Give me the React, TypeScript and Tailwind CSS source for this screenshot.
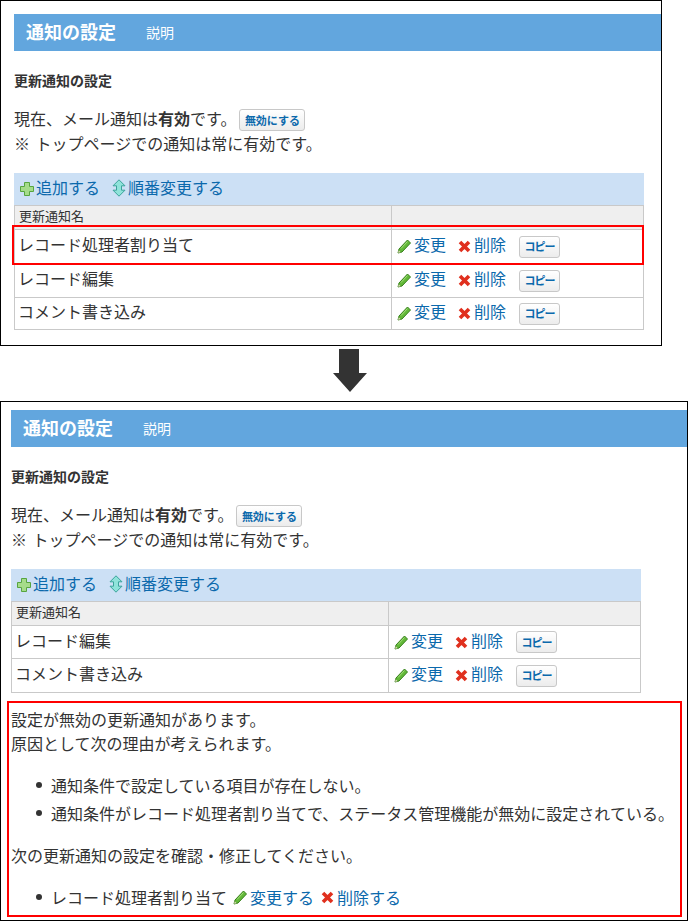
import * as React from 'react';

const font = { fontFamily: '"Noto Sans CJK JP", "Noto Sans", sans-serif' };

function PlusIcon() {
    return (
        <svg width="14" height="14" viewBox="0 0 14 14" className="mt-[4px] shrink-0">
            <path d="M4.5 .5h5v4h4v5h-4v4h-5v-4h-4v-5h4z" fill="#a5dc8a" stroke="#57a53f" strokeWidth="1" />
        </svg>
    );
}

function SortIcon() {
    return (
        <svg width="14" height="18" viewBox="0 0 14 18" className="mt-[2px] shrink-0">
            <path d="M7 .8l6 6H9.5v4.4H13l-6 6-6-6h3.5V6.8H1z" fill="#8fe3da" stroke="#3ba39a" strokeWidth="1" />
        </svg>
    );
}

function PencilIcon() {
    return (
        <svg width="14" height="15" viewBox="0 0 14 15" className="shrink-0">
            <path d="M10.5 1L13.5 4 5 13 1 14l1-4z" fill="#62b838" stroke="#37801c" strokeWidth="1" strokeLinejoin="round" />
            <path d="M10.5 2.5L4 9.5" stroke="#a6e07c" strokeWidth="1" />
            <path d="M1.2 13.8l.5-2.6 2 2z" fill="#e8dcc0" />
        </svg>
    );
}

function CrossIcon() {
    return (
        <svg width="13" height="13" viewBox="0 0 13 13" className="shrink-0">
            <path d="M2 2l9 9M11 2l-9 9" stroke="#e0301e" strokeWidth="3.6" />
        </svg>
    );
}

function SmallButton({ children, className }: { children: React.ReactNode; className: string }) {
    return (
        <button className={`flex items-center justify-center rounded-[3px] border border-[#c8c8c8] bg-gradient-to-b from-white to-[#ececec] font-bold text-[#0b69ac] ${className}`}>
            {children}
        </button>
    );
}

function Row({ name, h }: { name: string; h: string }) {
    return (
        <tr className={h}>
            <td className="border border-[#c9c9c9] pb-[5px] pl-[3px] text-base">{name}</td>
            <td className="border border-[#c9c9c9] pl-[5px]">
                <div className="flex items-center text-[#0b69ac]">
                    <PencilIcon />
                    <span className="ml-[3px] pb-[5px] text-base">変更</span>
                    <span className="ml-[12px]"><CrossIcon /></span>
                    <span className="ml-[3px] pb-[5px] text-base">削除</span>
                    <SmallButton className="ml-[13px] h-[22px] w-[41px] text-[11px] tracking-[-1px]">コピー</SmallButton>
                </div>
            </td>
        </tr>
    );
}

function Settings() {
    return (
        <>
            <div className="flex h-[37px] items-center bg-[#62a6de] pl-3 text-white">
                <h1 className="pb-[3px] text-lg font-bold">通知の設定</h1>
                <span className="ml-[30px] pb-[2px] text-sm">説明</span>
            </div>
            <div className="mt-[19px] text-sm font-bold leading-5">更新通知の設定</div>
            <div className="mt-[15px] text-base leading-[26px]">
                <div className="flex items-center">
                    現在、メール通知は<b>有効</b>です。
                    <SmallButton className="ml-[3px] mt-[3px] h-[22px] w-[66px] text-[11px]">無効にする</SmallButton>
                </div>
                <div className="mt-[-1px]"><span className="mr-[2px]">※</span> トップページでの通知は常に有効です。</div>
            </div>
        </>
    );
}

function NotifyTable({ rows, heights, highlight }: { rows: string[]; heights: string[]; highlight?: boolean }) {
    return (
        <div className="relative mt-[17px] w-[630px]">
            <div className="flex h-8 items-center bg-[#cce0f5] pb-1 pl-[6px] text-base text-[#0b69ac]">
                <PlusIcon />
                <span className="ml-[2px]">追加する</span>
                <span className="ml-3"><SortIcon /></span>
                <span className="ml-[2px]">順番変更する</span>
            </div>
            <table className="w-full table-fixed border-collapse">
                <thead>
                    <tr className="h-6 bg-[#efefef] text-left">
                        <th className="w-[377px] border border-[#c9c9c9] pb-[3px] pl-1 text-[13px] font-normal">更新通知名</th>
                        <th className="border border-[#c9c9c9]"></th>
                    </tr>
                </thead>
                <tbody>
                    {rows.map((name, i) => (
                        <Row key={name} name={name} h={heights[i]} />
                    ))}
                </tbody>
            </table>
            {highlight && (
                <div className="absolute left-[-2px] top-[52px] h-[40px] w-[632px] border-2 border-[#f00]"></div>
            )}
        </div>
    );
}

function Bullet({ children }: { children: React.ReactNode }) {
    return (
        <li className="flex items-center">
            <span className="mr-[9px] h-[6px] w-[6px] shrink-0 rounded-full bg-[#333]"></span>
            {children}
        </li>
    );
}

export default function App() {
    return (
        <div className="h-[921px] w-[688px] bg-white text-[#333]" style={font}>
            <div className="h-[346px] w-[662px] border border-black pl-[13px] pt-[13px]">
                <Settings />
                <NotifyTable
                    highlight
                    rows={['レコード処理者割り当て', 'レコード編集', 'コメント書き込み']}
                    heights={['h-[34px]', 'h-[34px]', 'h-[32px]']}
                />
            </div>
            <div className="ml-[333px] mt-[3px] h-[52px]">
                <svg width="34" height="43" viewBox="0 0 34 43">
                    <path d="M6 0h20v24h8L17 43 0 24h6z" fill="#333" />
                </svg>
            </div>
            <div className="h-[520px] w-[688px] border border-black pl-[10px] pt-2">
                <Settings />
                <NotifyTable rows={['レコード編集', 'コメント書き込み']} heights={['h-[33px]', 'h-[34px]']} />
                <div className="ml-[-4px] mt-[8px] h-[216px] w-[675px] border-2 border-[#f00] pl-[2px] pt-[4px] text-base leading-6">
                    <p>設定が無効の更新通知があります。</p>
                    <p>原因として次の理由が考えられます。</p>
                    <ul className="ml-[25px] mt-[16px] leading-7">
                        <Bullet>通知条件で設定している項目が存在しない。</Bullet>
                        <Bullet>通知条件がレコード処理者割り当てで、ステータス管理機能が無効に設定されている。</Bullet>
                    </ul>
                    <p className="mt-[16px]">次の更新通知の設定を確認・修正してください。</p>
                    <ul className="ml-[25px] mt-[16px] leading-7">
                        <Bullet>
                            レコード処理者割り当て
                            <span className="ml-[6px]"><PencilIcon /></span>
                            <span className="ml-[3px] text-[#0b69ac]">変更する</span>
                            <span className="ml-[7px]"><CrossIcon /></span>
                            <span className="ml-[3px] text-[#0b69ac]">削除する</span>
                        </Bullet>
                    </ul>
                </div>
            </div>
        </div>
    );
}
